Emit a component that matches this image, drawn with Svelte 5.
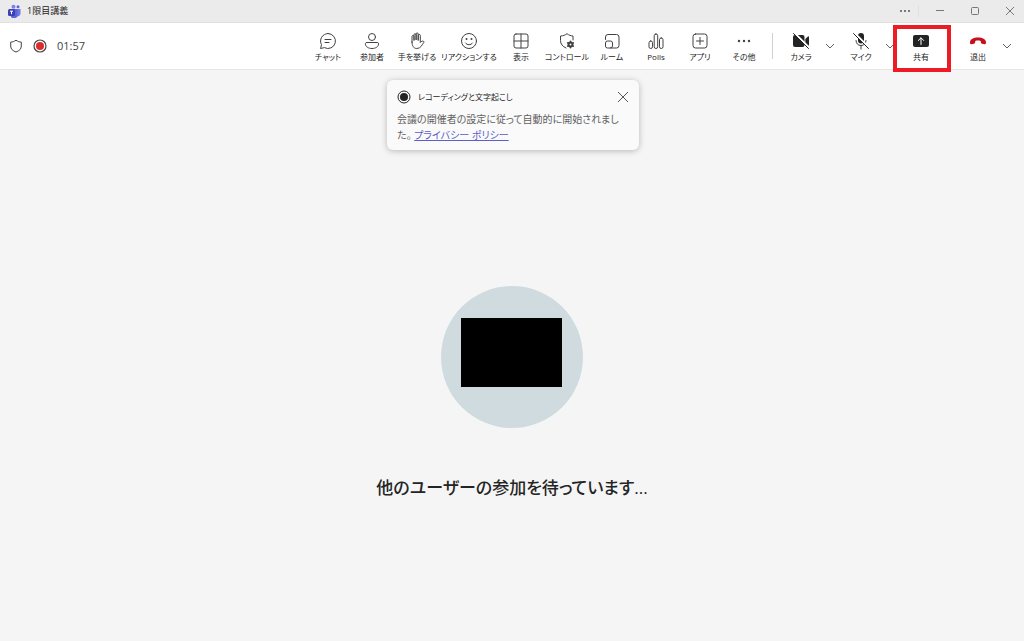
<script>
  const tools = [
    { id: 'chat', label: 'チャット' },
    { id: 'people', label: '参加者' },
    { id: 'hand', label: '手を挙げる', size: 'mid' },
    { id: 'react', label: 'リアクションする', size: 'wide' },
    { id: 'view', label: '表示', size: 'mid' },
    { id: 'control', label: 'コントロール', size: 'mid' },
    { id: 'rooms', label: 'ルーム' },
    { id: 'polls', label: 'Polls' },
    { id: 'apps', label: 'アプリ' },
    { id: 'more', label: 'その他' }
  ];

  let showNotice = true;
  const closeNotice = () => {
    showNotice = false;
  };
</script>

<div class="window">
  <header class="titlebar">
    <svg class="logo" viewBox="0 0 14 14" aria-hidden="true">
      <circle cx="6.500" cy="2.800" r="2" fill="#7b83eb" />
      <circle cx="11" cy="2.800" r="1.500" fill="#5b64d8" />
      <path d="M9 5h4.500v4.500A3 3 0 0 1 9 12z" fill="#6f78e6" />
      <path d="M3.500 5H10.500v5a3.500 3.500 0 0 1-7 1.500z" fill="#5b64d8" />
      <rect x="1" y="5" width="7" height="7" rx="1.500" fill="#3b3fb6" />
      <path d="M3 7.200h3M4.500 7.200v3" stroke="#fff" fill="none" />
    </svg>
    <span class="title">1限目講義</span>
    <div class="controls">
      <button class="more" aria-label="その他のオプション">
        <svg viewBox="0 0 12 12"><g fill="#444"><circle cx="2" cy="6" r=".9" /><circle cx="6" cy="6" r=".9" /><circle cx="10" cy="6" r=".9" /></g></svg>
      </button>
      <button aria-label="最小化">
        <svg viewBox="0 0 12 12"><path d="M2 5.500h8" /></svg>
      </button>
      <button aria-label="最大化">
        <svg viewBox="0 0 12 12"><rect x="2.500" y="2.500" width="7" height="7" rx="1" /></svg>
      </button>
      <button aria-label="閉じる">
        <svg viewBox="0 0 12 12"><path d="M2 2l8 8M10 2l-8 8" /></svg>
      </button>
    </div>
  </header>

  <div class="toolbar">
    <div class="status">
      <svg viewBox="0 0 14 14" aria-hidden="true">
        <path d="M7 1.200C8.600 2.400 10.300 3 12.300 3.100V7c0 2.900-1.800 4.800-5.300 6C3.500 11.800 1.700 9.900 1.700 7V3.100C3.700 3 5.400 2.400 7 1.200z" fill="none" stroke="#444" />
      </svg>
      <svg viewBox="0 0 14 14" aria-hidden="true">
        <circle cx="7" cy="7" r="6" fill="none" stroke="#444" stroke-width="1.2" />
        <circle cx="7" cy="7" r="4" fill="#d92c2c" />
      </svg>
      <span class="time">01:57</span>
    </div>

    <div class="tools">
      {#each tools as tool}
      <button class="tool {tool.size || ''}">
        <svg viewBox="0 0 18 18" aria-hidden="true">
          {#if tool.id === 'chat'}
          <path d="M9 1.500a7.500 7.500 0 1 1-3.600 14.100L1.600 16.500l.9-3.800A7.500 7.500 0 0 1 9 1.500zM6 7.500h6M6 10.500h4" />
          {:else if tool.id === 'people'}
          <circle cx="9" cy="5" r="3.500" />
          <path d="M3.800 10.500h10.400c.9 0 1.400.6 1.400 1.300 0 2.900-2.900 4.700-6.600 4.700s-6.600-1.800-6.600-4.700c0-.7.500-1.300 1.400-1.300z" />
          {:else if tool.id === 'hand'}
          <path d="M4 10V4.500a1 1 0 0 1 2 0V8.500V2.800a1 1 0 0 1 2.100 0V8V2a1 1 0 0 1 2.100 0V8.500V3.500a1 1 0 0 1 2.100 0v7c1-1.200 2.200-1.800 3.400-1.100.5.3.3.8 0 1.200-1.700 2-2.700 5.900-6.900 5.900C5.500 16.500 4 13.800 4 10z" />
          {:else if tool.id === 'react'}
          <circle cx="9" cy="9" r="7.500" />
          <path d="M5.500 11c1.700 2.400 5.300 2.400 7 0" />
          <circle class="solid" cx="6.500" cy="7" r="1" />
          <circle class="solid" cx="11.500" cy="7" r="1" />
          {:else if tool.id === 'view'}
          <rect x="2" y="2" width="14" height="14" rx="2" />
          <path d="M9 2v14M2 9h14" />
          {:else if tool.id === 'control'}
          <path d="M8 16C4.500 14.500 2.500 12 2.500 8.500V4C5 3.900 7 3.200 9 1.700c2 1.500 4 2.200 6 2.300v4" />
          <circle class="gear" cx="12.500" cy="12.500" r="2" />
          <path class="teeth" d="M12.500 9.200v1.300M12.500 14.500v1.300M9.700 10.900l1.100.6M14.200 13.500l1.100.6M9.700 14.100l1.100-.6M14.200 11.500l1.100-.6" />
          {:else if tool.id === 'rooms'}
          <path d="M2.500 7.500V5A2.500 2.500 0 0 1 5 2.500H13.500A2.500 2.500 0 0 1 16 5v8.500a2.500 2.500 0 0 1-2.500 2.500H4.500a2 2 0 0 1-2-2V11a2 2 0 0 1 2-2H7.500a2 2 0 0 1 2 2v3a2 2 0 0 1-2 2" />
          {:else if tool.id === 'polls'}
          <rect x="2" y="9" width="3.500" height="7.500" rx="1.700" />
          <rect x="7.200" y="2" width="3.500" height="14.500" rx="1.700" />
          <rect x="12.500" y="6" width="3.500" height="10.500" rx="1.700" />
          {:else if tool.id === 'apps'}
          <rect x="2" y="2" width="14" height="14" rx="2.500" />
          <path d="M9 5.500v7M5.500 9h7" />
          {:else}
          <circle class="solid" cx="4" cy="9" r="1.200" />
          <circle class="solid" cx="9" cy="9" r="1.200" />
          <circle class="solid" cx="14" cy="9" r="1.200" />
          {/if}
        </svg>
        <span>{tool.label}</span>
      </button>
      {/each}
    </div>

    <div class="divider"></div>

    <div class="devices">
      <div class="group">
        <button class="tool">
          <svg viewBox="0 0 18 18" aria-hidden="true">
            <rect class="dark" x="1" y="3" width="11.500" height="12" rx="2" />
            <path class="dark" d="M13.300 7l2.700-2.500c.5-.4 1-.1 1 .5v8c0 .6-.5.900-1 .5L13.300 11z" />
            <path class="gap" d="M3 1.500l14 14" />
            <path class="slash" d="M1.500 1.500l15 15" />
          </svg>
          <span>カメラ</span>
        </button>
        <button class="chevron" aria-label="カメラのオプション">
          <svg viewBox="0 0 10 10"><path d="M1 3l4 4 4-4" /></svg>
        </button>
      </div>
      <div class="group">
        <button class="tool">
          <svg viewBox="0 0 18 18" aria-hidden="true">
            <rect class="dark" x="6" y="1" width="6" height="10.500" rx="3" />
            <path d="M4 8.500c0 3 2 5 5 5s5-2 5-5M9 13.500V17" />
            <path class="gap" d="M3 1.500l14 14" />
            <path class="slash" d="M1.500 1.500l15 15" />
          </svg>
          <span>マイク</span>
        </button>
        <button class="chevron" aria-label="マイクのオプション">
          <svg viewBox="0 0 10 10"><path d="M1 3l4 4 4-4" /></svg>
        </button>
      </div>
      <button class="tool share">
        <svg viewBox="0 0 18 18" aria-hidden="true">
          <rect class="dark" x="1" y="3" width="16" height="12" rx="2" />
          <path class="arrow" d="M9 12.500V6M6.300 8.500L9 5.800l2.700 2.700" />
        </svg>
        <span>共有</span>
      </button>
      <div class="group leave">
        <button class="tool">
          <svg viewBox="0 0 18 18" aria-hidden="true">
            <path class="phone" d="M9 5.500c4.500 0 8 1.700 8 4.700 0 1.500-.6 2.200-1.700 2l-2.300-.5c-.7-.2-1-.6-1.100-1.300L11.700 9c-1.700-.6-3.700-.6-5.400 0l-.2 1.400c-.1.700-.4 1.100-1.100 1.300l-2.300.5c-1.100.2-1.700-.5-1.700-2 0-3 3.500-4.700 8-4.700z" />
          </svg>
          <span>退出</span>
        </button>
        <button class="chevron" aria-label="退出のオプション">
          <svg viewBox="0 0 10 10"><path d="M1 3l4 4 4-4" /></svg>
        </button>
      </div>
    </div>
  </div>

  <main class="stage">
    {#if showNotice}
    <section class="notice">
      <div class="notice-head">
        <svg viewBox="0 0 14 14" aria-hidden="true">
          <circle cx="7" cy="7" r="6" fill="none" stroke="#242424" />
          <circle cx="7" cy="7" r="4" fill="#242424" />
        </svg>
        <h2>レコーディングと文字起こし</h2>
        <button aria-label="閉じる" on:click={closeNotice}>
          <svg viewBox="0 0 12 12"><path d="M1 1l10 10M11 1L1 11" fill="none" stroke="#555" /></svg>
        </button>
      </div>
      <p>会議の開催者の設定に従って自動的に開始されました。 <a href="#privacy">プライバシー ポリシー</a></p>
    </section>
    {/if}
    <div class="avatar">
      <div class="mask"></div>
    </div>
    <h1>他のユーザーの参加を待っています...</h1>
  </main>
</div>

<style>
  :global(body) {
    margin: 0;
    background: #f5f5f5;
  }
  .window {
    display: flex;
    flex-direction: column;
    min-height: 100vh;
    font-family: "Open Sans", "Noto Sans CJK JP", sans-serif;
    font-feature-settings: "palt";
    color: #242424;
  }
  button {
    padding: 0;
    border: 0;
    background: none;
    color: inherit;
    font: inherit;
    font-feature-settings: inherit;
    cursor: pointer;
  }
  svg {
    display: block;
    flex: none;
  }
  .titlebar {
    display: flex;
    align-items: center;
    height: 22px;
    padding-left: 7px;
    background: #ebebeb;
    border-bottom: 1px solid #e0e0e0;
  }
  .logo {
    width: 14px;
    height: 14px;
  }
  .title {
    flex: 1;
    margin-left: 6px;
    font-size: 9px;
    line-height: 16px;
  }
  .controls {
    display: flex;
    gap: 7px;
  }
  .controls button {
    display: flex;
    justify-content: center;
    width: 28px;
  }
  .controls .more {
    border-right: 1px solid #e0e0e0;
  }
  .controls svg {
    width: 12px;
    height: 12px;
    fill: none;
    stroke: #777;
  }
  .controls .more svg {
    stroke: none;
  }
  .toolbar {
    position: relative;
    z-index: 1;
    display: flex;
    height: 46px;
    padding: 0 10px 0 9px;
    background: #fff;
    border-bottom: 1px solid #e6e6e6;
  }
  .status {
    display: flex;
    align-items: center;
    flex: 1;
    gap: 10px;
  }
  .status svg {
    width: 14px;
    height: 14px;
  }
  .time {
    color: #424242;
    font-size: 11px;
    line-height: 16px;
  }
  .tools,
  .devices,
  .group {
    display: flex;
  }
  .tool {
    display: flex;
    flex-direction: column;
    align-items: center;
    width: 44px;
    padding-top: 9px;
    font-size: 8px;
    line-height: 14px;
    white-space: nowrap;
  }
  .tool.mid {
    width: 46px;
  }
  .tool.wide {
    width: 58px;
  }
  .tool svg {
    width: 18px;
    height: 18px;
    fill: none;
    stroke: #424242;
    stroke-linecap: round;
    stroke-linejoin: round;
  }
  .tool .solid {
    fill: #424242;
    stroke: none;
  }
  .tool .gear {
    stroke-width: 2;
  }
  .tool .teeth {
    stroke-width: 1.6;
  }
  .tool .dark {
    fill: #242424;
    stroke: none;
  }
  .tool .gap {
    stroke: #fff;
    stroke-width: 2;
  }
  .tool .slash {
    stroke: #242424;
  }
  .tool .arrow {
    stroke: #fff;
  }
  .tool .phone {
    fill: #c50f1f;
    stroke: none;
  }
  .divider {
    align-self: center;
    width: 1px;
    height: 26px;
    margin: 0 6px;
    background: #d1d1d1;
  }
  .devices .group {
    margin-right: 2px;
  }
  .devices .leave {
    margin: 0 0 0 13px;
  }
  .chevron {
    display: flex;
    align-items: center;
    justify-content: center;
    width: 14px;
  }
  .chevron svg {
    width: 10px;
    height: 10px;
    fill: none;
    stroke: #616161;
  }
  .share {
    position: relative;
  }
  .share::after {
    content: "";
    position: absolute;
    inset: 2px -8px -3px -6px;
    border: 4px solid #ed1c24;
  }
  .stage {
    position: relative;
    display: flex;
    flex: 1;
    flex-direction: column;
    align-items: center;
    justify-content: center;
    padding-top: 74px;
    background: #f5f5f5;
  }
  .notice {
    position: absolute;
    top: 10px;
    left: 50%;
    box-sizing: border-box;
    width: 252px;
    margin-left: -125px;
    padding: 9px 10px 7px;
    border-radius: 6px;
    background: #fafafa;
    box-shadow: 0 1px 6px rgba(0, 0, 0, 0.25);
  }
  .notice-head {
    display: flex;
    align-items: center;
    gap: 7px;
  }
  .notice-head svg {
    width: 14px;
    height: 14px;
  }
  .notice-head button svg {
    width: 12px;
    height: 12px;
  }
  h2 {
    flex: 1;
    margin: 0;
    font-size: 8px;
    font-weight: 400;
    line-height: 16px;
  }
  .notice p {
    margin: 6px 0 0;
    color: #616161;
    font-size: 10px;
    line-height: 16px;
  }
  .notice a {
    color: #5b5fc7;
  }
  .avatar {
    display: flex;
    align-items: center;
    justify-content: center;
    box-sizing: border-box;
    width: 142px;
    height: 142px;
    padding: 0 2px 8px 0;
    border-radius: 50%;
    background: #d0dbe0;
  }
  .mask {
    width: 101px;
    height: 69px;
    background: #000;
  }
  h1 {
    margin: 48px 0 0;
    font-size: 17px;
    font-weight: 500;
    line-height: 24px;
  }
</style>
